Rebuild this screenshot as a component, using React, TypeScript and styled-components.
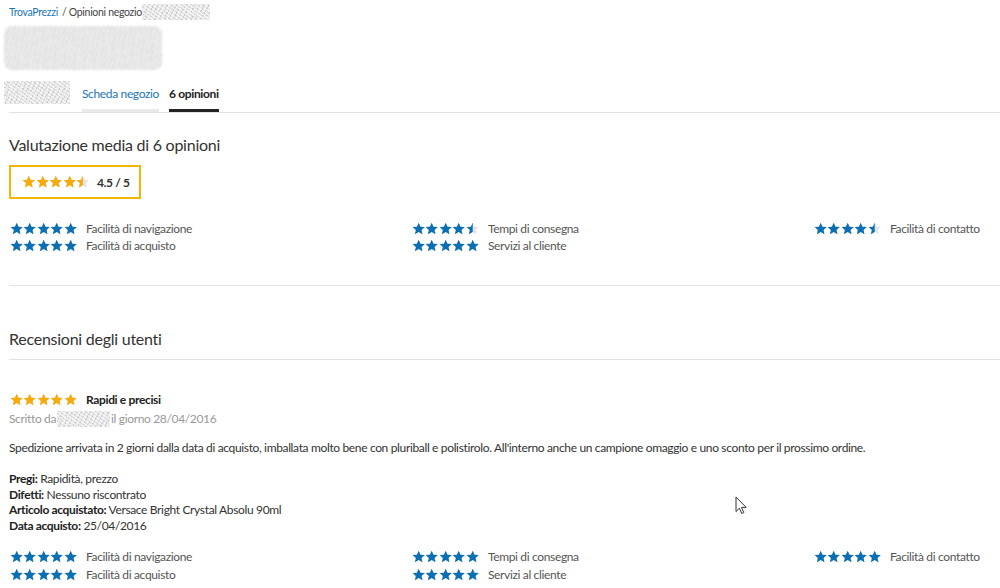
import React, { useId } from 'react';
import styled, { createGlobalStyle } from 'styled-components';

const GlobalStyle = createGlobalStyle`
  html, body {
    margin: 0;
    padding: 0;
    background: #fff;
  }
  body {
    font-family: Lato, 'Open Sans', Arial, sans-serif;
    color: #333;
    letter-spacing: -0.35px;
  }
`;

const BLUE = '#0b6fb3';
const GOLD = '#f5ab0a';
const EMPTY = '#e3e3e3';

const STAR =
  'M12 1.2l3.2 7.1 7.7.8-5.8 5.2 1.7 7.6L12 18l-6.8 3.9 1.7-7.6L1.1 9.1l7.7-.8z';

interface StarProps {
  fill: number;
  color: string;
  size: number;
}

const Star = ({ fill, color, size }: StarProps) => {
  const id = useId().replace(/:/g, '');
  return (
    <svg width={size} height={size} viewBox="0 0 24 24">
      <defs>
        <clipPath id={id}>
          <rect x="0" y="0" width={24 * fill} height="24" />
        </clipPath>
      </defs>
      <path d={STAR} fill={EMPTY} />
      <path d={STAR} fill={color} clipPath={`url(#${id})`} />
    </svg>
  );
};

const StarRow = styled.span`
  display: inline-flex;
  align-items: center;
  flex-shrink: 0;
`;

const Stars = ({
  value,
  color,
  size = 13.4
}: {
  value: number;
  color: string;
  size?: number;
}) => (
  <StarRow>
    {[0, 1, 2, 3, 4].map(i => (
      <Star
        key={i}
        size={size}
        color={color}
        fill={Math.max(0, Math.min(1, value - i))}
      />
    ))}
  </StarRow>
);

const Page = styled.div`
  position: relative;
  width: 1000px;
  height: 588px;
  overflow: hidden;
`;

const Blur = styled.div<{ $w: number; $h: number }>`
  width: ${p => p.$w}px;
  height: ${p => p.$h}px;
  flex-shrink: 0;
  background-color: #e9e9e9;
  background-image: repeating-linear-gradient(
      35deg,
      rgba(255, 255, 255, 0.7) 0 1px,
      transparent 1px 3px
    ),
    repeating-linear-gradient(
      -60deg,
      rgba(180, 180, 180, 0.5) 0 1px,
      transparent 1px 4px
    ),
    repeating-linear-gradient(
      100deg,
      rgba(210, 210, 210, 0.6) 0 1px,
      transparent 1px 5px
    );
`;

const Breadcrumb = styled.div`
  display: flex;
  align-items: center;
  height: 24px;
  padding-left: 9px;
  font-size: 10.5px;
  letter-spacing: -0.3px;
  color: #444;
  a {
    color: #1b75bb;
    text-decoration: none;
    margin-right: 4px;
  }
`;

const Logo = styled(Blur)`
  margin: 2px 0 0 4px;
  filter: blur(0.8px);
  border-radius: 8px;
`;

const TabBar = styled.div`
  display: flex;
  align-items: flex-start;
  margin-top: 10px;
  padding-left: 4px;
`;

const Thumb = styled(Blur)`
  margin: 1px 12px 0 0;
`;

const Tab = styled.div<{ $active?: boolean }>`
  margin: 6px 10px 0 0;
  line-height: 16px;
  font-size: 12px;
  padding-bottom: 7px;
  border-bottom: 3px solid ${p => (p.$active ? '#222' : '#eaeaea')};
  color: ${p => (p.$active ? '#222' : '#1b75bb')};
  font-weight: ${p => (p.$active ? 700 : 400)};
`;

const Divider = styled.div<{ $top?: number; $left?: number }>`
  height: 1px;
  background: #e2e2e2;
  margin-top: ${p => p.$top || 0}px;
  margin-left: ${p => p.$left || 0}px;
`;

const Content = styled.div`
  padding-left: 9px;
`;

const Heading = styled.h2<{ $top: number }>`
  margin: ${p => p.$top}px 0 0;
  font-size: 16px;
  line-height: 20px;
  font-weight: 400;
  letter-spacing: -0.25px;
  color: #333;
`;

const ScoreBox = styled.div`
  display: inline-flex;
  align-items: center;
  gap: 7px;
  box-sizing: border-box;
  height: 34px;
  width: 132px;
  margin-top: 10px;
  padding: 0 0 0 11px;
  border: 2px solid #f2b705;
  font-size: 12px;
  font-weight: 700;
  color: #333;
`;

const Grid = styled.div<{ $top: number; $line: number }>`
  display: grid;
  grid-template-columns: 402px 402px 1fr;
  margin-top: ${p => p.$top}px;
  line-height: ${p => p.$line}px;
`;

const Col = styled.div`
  display: flex;
  flex-direction: column;
  padding-left: 1px;
`;

const Criterion = styled.div`
  display: flex;
  align-items: center;
  gap: 9px;
  font-size: 12px;
  color: #555;
`;

const Review = styled.div`
  margin-top: 31px;
`;

const ReviewTitle = styled.div`
  display: flex;
  align-items: center;
  gap: 9px;
  padding-left: 1px;
  line-height: 18px;
  font-size: 12px;
  font-weight: 700;
  color: #222;
`;

const Byline = styled.div`
  display: flex;
  align-items: center;
  line-height: 19px;
  font-size: 12px;
  color: #999;
`;

const BylineBlur = styled(Blur)`
  margin: 0 1px 0 1px;
`;

const Body = styled.p`
  margin: 11px 0 0;
  line-height: 18px;
  font-size: 12px;
  color: #333;
`;

const Facts = styled.div`
  margin-top: 14px;
  font-size: 12px;
  line-height: 15.5px;
  color: #333;
  b {
    font-weight: 700;
    color: #222;
  }
`;

const Cursor = styled.svg`
  position: absolute;
  left: 735px;
  top: 496px;
`;

const summary = [
  [
    { label: 'Facilità di navigazione', value: 5 },
    { label: 'Facilità di acquisto', value: 5 }
  ],
  [
    { label: 'Tempi di consegna', value: 4.5 },
    { label: 'Servizi al cliente', value: 5 }
  ],
  [{ label: 'Facilità di contatto', value: 4.5 }]
];

const reviewScores = [
  [
    { label: 'Facilità di navigazione', value: 5 },
    { label: 'Facilità di acquisto', value: 5 }
  ],
  [
    { label: 'Tempi di consegna', value: 5 },
    { label: 'Servizi al cliente', value: 5 }
  ],
  [{ label: 'Facilità di contatto', value: 5 }]
];

const Criteria = ({
  cols,
  top,
  line
}: {
  cols: { label: string; value: number }[][];
  top: number;
  line: number;
}) => (
  <Grid $top={top} $line={line}>
    {cols.map((col, i) => (
      <Col key={i}>
        {col.map(c => (
          <Criterion key={c.label}>
            <Stars value={c.value} color={BLUE} />
            {c.label}
          </Criterion>
        ))}
      </Col>
    ))}
  </Grid>
);

const App = () => (
  <Page>
    <GlobalStyle />
    <Breadcrumb>
      <a href="#">TrovaPrezzi</a>
      <span>/ Opinioni negozio</span>
      <Blur $w={68} $h={16} />
    </Breadcrumb>
    <Logo $w={158} $h={44} />
    <TabBar>
      <Thumb $w={66} $h={23} />
      <Tab>Scheda negozio</Tab>
      <Tab $active>6 opinioni</Tab>
    </TabBar>
    <Divider $left={9} />

    <Content>
      <Heading $top={22}>Valutazione media di 6 opinioni</Heading>
      <ScoreBox>
        <Stars value={4.5} color={GOLD} size={13.6} />
        <span>4.5 / 5</span>
      </ScoreBox>
      <Criteria cols={summary} top={21} line={17} />
      <Divider $top={31} />

      <Heading $top={43}>Recensioni degli utenti</Heading>
      <Divider $top={10} />

      <Review>
        <ReviewTitle>
          <Stars value={5} color={GOLD} />
          Rapidi e precisi
        </ReviewTitle>
        <Byline>
          Scritto da
          <BylineBlur $w={53} $h={16} />
          il giorno 28/04/2016
        </Byline>
        <Body>
          Spedizione arrivata in 2 giorni dalla data di acquisto, imballata
          molto bene con pluriball e polistirolo. All'interno anche un campione
          omaggio e uno sconto per il prossimo ordine.
        </Body>
        <Facts>
          <div>
            <b>Pregi:</b> Rapidità, prezzo
          </div>
          <div>
            <b>Difetti:</b> Nessuno riscontrato
          </div>
          <div>
            <b>Articolo acquistato:</b> Versace Bright Crystal Absolu 90ml
          </div>
          <div>
            <b>Data acquisto:</b> 25/04/2016
          </div>
        </Facts>
        <Criteria cols={reviewScores} top={15} line={18} />
      </Review>
    </Content>

    <Cursor width="12" height="20" viewBox="0 0 12 20">
      <path
        d="M1 1v14.5l3.4-3.3 2.3 5.3 2.1-.9-2.3-5.2h4.6z"
        fill="#fff"
        stroke="#333"
        strokeWidth="1"
        strokeLinejoin="round"
      />
    </Cursor>
  </Page>
);

export default App;
